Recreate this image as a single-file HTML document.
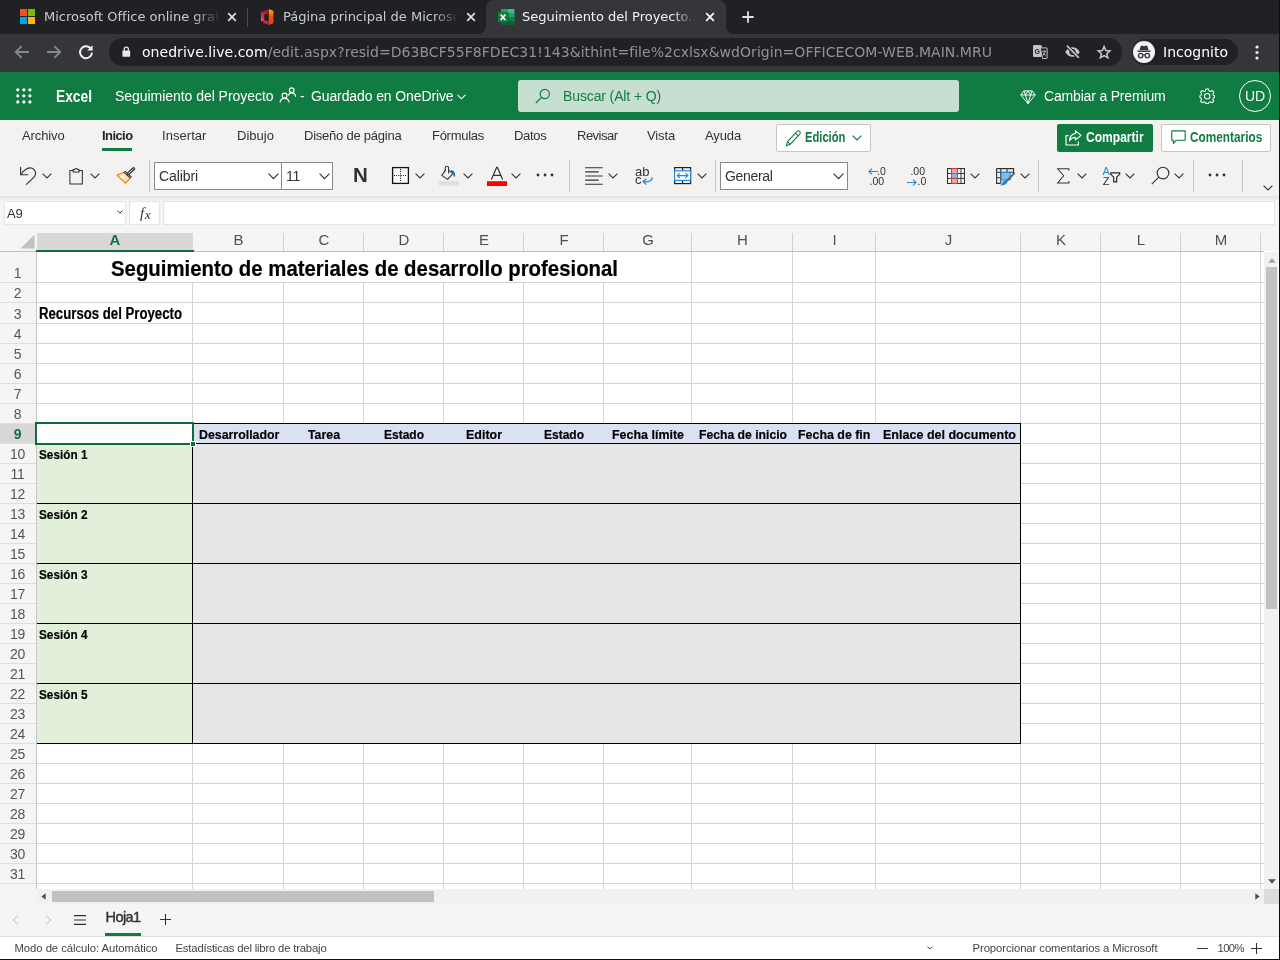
<!DOCTYPE html>
<html lang="es">
<head>
<meta charset="utf-8">
<title>Seguimiento del Proyecto.xlsx</title>
<style>
*{box-sizing:border-box;margin:0;padding:0}
html,body{width:1280px;height:960px;overflow:hidden;background:#f3f2f1}
body{position:relative;font-family:"Liberation Sans",sans-serif;color:#252423}
.a{position:absolute}
.t{position:absolute;white-space:nowrap;line-height:1}
.dj{font-family:"DejaVu Sans","Liberation Sans",sans-serif}
svg{position:absolute;overflow:visible}
/* chrome */
#tabstrip{left:0;top:0;width:1280px;height:34px;background:#202124}
#toolbar{left:0;top:34px;width:1280px;height:38px;background:#35363a}
#omni{left:109px;top:38px;width:1013px;height:28px;border-radius:14px;background:#202124}
#acttab{left:486px;top:0;width:240px;height:34px;background:#35363a;border-radius:8px 8px 0 0}
.tabt{font-size:13px;color:#c9ccd0}
/* excel header */
#xlhead{left:0;top:72px;width:1280px;height:48px;background:#107c41}
#search{left:518px;top:80px;width:441px;height:32px;border-radius:3px;background:#c7dfd1}
#ribbon{left:0;top:120px;width:1280px;height:76px;background:#f3f2f1}
.tab{font-size:13px;color:#323130}
.wbox{position:absolute;background:#fff;border:1px solid #8a8886}
.sep{position:absolute;width:1px;background:#c8c6c4}
/* grid */
.ch{position:absolute;top:232px;height:18px;font-size:15px;color:#505050;text-align:center;line-height:15px}
.rh{position:absolute;left:0;width:35px;height:20px;font-size:14px;color:#555;text-align:center;line-height:21px;letter-spacing:-0.3px}
.cell{font-weight:bold;color:#000;-webkit-text-stroke:0.2px #000}
.vl{position:absolute;width:1px;background:#d4d4d4}
.hl{position:absolute;height:1px;background:#d4d4d4}
.bl{position:absolute;background:#000}
</style>
</head>
<body>
<div id="root" style="position:absolute;left:0;top:0;width:1280px;height:960px;will-change:transform;transform:translateZ(0)">
<!-- ============ CHROME BROWSER ============ -->
<div class="a" id="tabstrip"></div>
<div class="a" id="acttab"></div>
<svg style="left:478px;top:26px" width="8" height="8" viewBox="0 0 8 8"><path d="M8 0V8H0A8 8 0 0 0 8 0Z" fill="#35363a"/></svg>
<svg style="left:726px;top:26px" width="8" height="8" viewBox="0 0 8 8"><path d="M0 0V8H8A8 8 0 0 1 0 0Z" fill="#35363a"/></svg>
<div class="a" id="toolbar"></div>
<div class="a" id="omni"></div>
<!-- tab 1 -->
<svg style="left:20px;top:9px" width="15" height="15" viewBox="0 0 15.6 15.6"><rect x="0" y="0" width="7.3" height="7.3" fill="#f25022"/><rect x="8.3" y="0" width="7.3" height="7.3" fill="#7fba00"/><rect x="0" y="8.3" width="7.3" height="7.3" fill="#00a4ef"/><rect x="8.3" y="8.3" width="7.3" height="7.3" fill="#ffb900"/></svg>
<div class="a dj tabt" style="left:44px;top:8px;width:176px;height:18px;overflow:hidden;line-height:18px;white-space:nowrap;-webkit-mask-image:linear-gradient(90deg,#000 150px,transparent 176px);mask-image:linear-gradient(90deg,#000 150px,transparent 176px)">Microsoft Office online gratis</div>
<svg style="left:227px;top:12px" width="10" height="10" viewBox="0 0 10 10"><path d="M1.2 1.2L8.8 8.8M8.8 1.2L1.2 8.8" stroke="#dfe1e5" stroke-width="1.7" fill="none"/></svg>
<div class="a" style="left:247px;top:8px;width:1px;height:19px;background:#4a4c50"></div>
<!-- tab 2 -->
<svg style="left:260.8px;top:8.9px" width="12.6" height="16.3" viewBox="0 0 12.6 16.3"><defs><linearGradient id="og1" x1="0" y1="0" x2="0" y2="1"><stop offset="0" stop-color="#ffb900"/><stop offset=".45" stop-color="#e8540b"/><stop offset="1" stop-color="#e8440a"/></linearGradient><linearGradient id="og2" x1="1" y1="0" x2="0" y2="1"><stop offset="0" stop-color="#a80f15"/><stop offset=".6" stop-color="#d4202c"/><stop offset="1" stop-color="#ec62c4"/></linearGradient><linearGradient id="og3" x1="0" y1="0" x2="1" y2="1"><stop offset="0" stop-color="#ff2a45"/><stop offset="1" stop-color="#b01020"/></linearGradient></defs><path d="M7.8 0.3L12.4 1.8V14.3L7.8 16.1Z" fill="url(#og1)"/><path d="M0 3.2L7.7 0.2V4.3L3.3 5.5V11.6L0 12.3Z" fill="url(#og2)"/><path d="M2.1 12.4L3.4 11.8H7.7V16.1L4.4 14.8L2.1 13.5Z" fill="url(#og3)"/></svg>
<div class="a dj tabt" style="left:283px;top:8px;width:176px;height:18px;overflow:hidden;line-height:18px;white-space:nowrap;-webkit-mask-image:linear-gradient(90deg,#000 150px,transparent 176px);mask-image:linear-gradient(90deg,#000 150px,transparent 176px)">Página principal de Microsoft Office</div>
<svg style="left:466px;top:12px" width="10" height="10" viewBox="0 0 10 10"><path d="M1.2 1.2L8.8 8.8M8.8 1.2L1.2 8.8" stroke="#dfe1e5" stroke-width="1.7" fill="none"/></svg>
<!-- tab 3 (active) -->
<svg style="left:498px;top:8.9px" width="16.3" height="16.1" viewBox="0 0 16.3 16.1"><rect x="3" y="0" width="13.3" height="16.1" rx=".6" fill="#21a366"/><rect x="9.7" y="0" width="6.6" height="4.1" fill="#33c481"/><rect x="9.7" y="4.1" width="6.6" height="4" fill="#21a366"/><rect x="3" y="8.1" width="13.3" height="4" fill="#107c41"/><rect x="3" y="12.1" width="13.3" height="4" fill="#185c37"/><rect x="3" y="3.6" width="7.8" height="10.4" fill="#0a4a2a" opacity=".55"/><rect x="0" y="3.1" width="10.1" height="10.2" rx=".6" fill="#107c41"/><path d="M2.7 5.5L7.4 11M7.4 5.5L2.7 11" stroke="#fff" stroke-width="1.7" fill="none"/></svg>
<div class="a dj tabt" style="left:522px;top:8px;width:174px;height:18px;overflow:hidden;line-height:18px;white-space:nowrap;color:#f1f3f4;-webkit-mask-image:linear-gradient(90deg,#000 150px,transparent 174px);mask-image:linear-gradient(90deg,#000 150px,transparent 174px)">Seguimiento del Proyecto.xlsx</div>
<svg style="left:705px;top:12px" width="10" height="10" viewBox="0 0 10 10"><path d="M1.2 1.2L8.8 8.8M8.8 1.2L1.2 8.8" stroke="#fff" stroke-width="1.7" fill="none"/></svg>
<!-- new tab -->
<svg style="left:742px;top:11px" width="12" height="12" viewBox="0 0 12 12"><path d="M6 0.3V11.7M0.3 6H11.7" stroke="#dee0e3" stroke-width="1.8" fill="none"/></svg>
<!-- nav buttons -->
<svg style="left:14px;top:45px" width="16" height="14" viewBox="0 0 16 14"><path d="M15 7H2.2M7.6 1.2L1.8 7L7.6 12.8" stroke="#85888c" stroke-width="1.9" fill="none"/></svg>
<svg style="left:46px;top:45px" width="16" height="14" viewBox="0 0 16 14"><path d="M1 7H13.8M8.4 1.2L14.2 7L8.4 12.8" stroke="#85888c" stroke-width="1.9" fill="none"/></svg>
<svg style="left:78px;top:44px" width="16" height="16" viewBox="0 0 16 16"><path d="M13.2 5.2A6 6 0 1 0 14 8.6" stroke="#f1f3f4" stroke-width="1.9" fill="none"/><path d="M14.6 1.2V6.6H9.2Z" fill="#f1f3f4"/></svg>
<!-- lock -->
<svg style="left:121.6px;top:46px" width="8.6" height="11.4" viewBox="0 0 10 13"><rect x="0.5" y="5" width="9" height="7.5" rx="1" fill="#e8eaed"/><path d="M2.6 5.5V3.6A2.4 2.4 0 0 1 7.4 3.6V5.5" stroke="#e8eaed" stroke-width="1.5" fill="none"/></svg>
<div class="t dj" style="left:142px;top:44px;font-size:14px;line-height:17px;color:#939393"><span style="letter-spacing:0.041px;display:inline-block"><span style="color:#fff">onedrive.live.com</span>/edit.aspx?resid=D63BCF55F8FDEC31!143&amp;ithint=file%2cxlsx&amp;wdOrigin=OFFICECOM-WEB.MAIN.MRU</span></div>
<!-- translate icon -->
<svg style="left:1032.8px;top:45px" width="14.6" height="14" viewBox="0 0 14.6 14"><rect x="0" y="0" width="8.7" height="12.1" rx="1" fill="#c2c4c6"/><path d="M7.2 2.9H13.6a.5.5 0 0 1 .5.5V13a.5.5 0 0 1-.5.5H9.6Z" fill="#202124" stroke="#c2c4c6" stroke-width="1"/><text x="1.6" y="8.6" font-size="7" font-weight="bold" fill="#202124" font-family="Liberation Sans,sans-serif">G</text><path d="M9.2 6.3H13M11.1 5.3V6.3M12.4 6.3C12 8.3 10.7 10 9.6 10.8M10.2 7.8C10.8 9.2 12 10.5 13 11" stroke="#c2c4c6" stroke-width="0.9" fill="none"/></svg>
<!-- eye off -->
<svg style="left:1064.5px;top:45px" width="15" height="13.6" viewBox="0 0 15 13.6"><path d="M0.3 7C1.8 3.9 4.4 2.2 7.5 2.2C10.6 2.2 13.2 3.9 14.7 7C13.2 10.1 10.6 11.8 7.5 11.8C4.4 11.8 1.8 10.1 0.3 7Z" fill="#c6c8ca"/><circle cx="7.5" cy="7" r="3.1" fill="#202124"/><circle cx="7.5" cy="7" r="1.7" fill="#c6c8ca"/><path d="M1.2 0.2L13.8 13" stroke="#202124" stroke-width="3.6"/><path d="M1.9 0.6L13.9 12.9" stroke="#c6c8ca" stroke-width="1.6"/></svg>
<!-- star -->
<svg style="left:1096.9px;top:45px" width="14.2" height="14" viewBox="0 0 14.2 14"><path d="M7.1 1.5L8.8 5.5L13 5.9L9.8 8.7L10.8 12.8L7.1 10.6L3.4 12.8L4.4 8.7L1.2 5.9L5.4 5.5Z" fill="none" stroke="#c6c8ca" stroke-width="1.5" stroke-linejoin="miter"/></svg>
<!-- incognito pill -->
<div class="a" style="left:1132px;top:39px;width:106px;height:26px;border-radius:13px;background:#202124"></div>
<svg style="left:1133px;top:41px" width="22" height="22" viewBox="0 0 22 22"><circle cx="11" cy="11" r="11" fill="#f1f3f4"/><path d="M7.6 5.2L8.6 4.6L11 5.2L13.4 4.6L14.4 5.2L15.6 9.2H6.4Z" fill="#35363a"/><rect x="4.4" y="9.6" width="13.2" height="1.3" fill="#35363a"/><circle cx="7.7" cy="14.5" r="2.2" fill="none" stroke="#35363a" stroke-width="1.3"/><circle cx="14.3" cy="14.5" r="2.2" fill="none" stroke="#35363a" stroke-width="1.3"/><path d="M9.7 14.1Q11 13.3 12.3 14.1" stroke="#35363a" stroke-width="1.1" fill="none"/></svg>
<div class="t dj" style="left:1163px;top:44px;font-size:14px;line-height:17px;color:#fff">Incognito</div>
<!-- kebab -->
<svg style="left:1255px;top:45px" width="4" height="15" viewBox="0 0 4 15"><circle cx="2" cy="2" r="1.6" fill="#f1f3f4"/><circle cx="2" cy="7.5" r="1.6" fill="#f1f3f4"/><circle cx="2" cy="13" r="1.6" fill="#f1f3f4"/></svg>
<!-- ============ EXCEL HEADER ============ -->
<div class="a" id="xlhead"></div>
<!-- waffle -->
<svg style="left:16px;top:87.9px" width="15.7" height="15.7" viewBox="-0.2 -0.2 15.8 15.8" fill="#fff"><circle cx="1.6" cy="1.6" r="1.6"/><circle cx="7.7" cy="1.6" r="1.6"/><circle cx="13.8" cy="1.6" r="1.6"/><circle cx="1.6" cy="7.7" r="1.6"/><circle cx="7.7" cy="7.7" r="1.6"/><circle cx="13.8" cy="7.7" r="1.6"/><circle cx="1.6" cy="13.8" r="1.6"/><circle cx="7.7" cy="13.8" r="1.6"/><circle cx="13.8" cy="13.8" r="1.6"/></svg>
<div class="t" style="left:56px;top:87px;font-size:16px;line-height:19px;font-weight:bold;color:#fff"><span style="transform:scaleX(0.8610);display:inline-block;transform-origin:0 50%">Excel</span></div>
<div class="t" style="left:115px;top:88px;font-size:14px;line-height:17px;color:#fff"><span style="letter-spacing:-0.044px;display:inline-block">Seguimiento del Proyecto</span></div>
<!-- people icon -->
<svg style="left:279px;top:86px" width="18" height="18" viewBox="0 0 18 18" fill="none" stroke="#fff" stroke-width="1.1"><circle cx="5.6" cy="9.6" r="2.5"/><path d="M1 16.6C1.3 13.6 3.2 12.4 5.6 12.4C8 12.4 9.9 13.6 10.2 16.6"/><circle cx="12.7" cy="4.2" r="2.3"/><path d="M9.4 9.6C10 7.7 11.3 6.9 12.7 6.9C14.7 6.9 16.3 8.2 16.6 10.8"/></svg>
<div class="t" style="left:300px;top:88px;font-size:14px;line-height:17px;color:#fff">-</div>
<div class="t" style="left:311px;top:88px;font-size:14px;line-height:17px;color:#fff"><span style="letter-spacing:-0.113px;display:inline-block">Guardado en OneDrive</span></div>
<svg style="left:457px;top:94px" width="9" height="6" viewBox="0 0 9 6"><path d="M0.6 0.8L4.5 4.8L8.4 0.8" stroke="#fff" stroke-width="1.1" fill="none"/></svg>
<!-- search -->
<div class="a" id="search"></div>
<svg style="left:535px;top:88px" width="16" height="16" viewBox="0 0 16 16" fill="none" stroke="#107c41" stroke-width="1.2"><circle cx="9.8" cy="6" r="4.6"/><path d="M6.5 9.3L0.8 15"/></svg>
<div class="t" style="left:563px;top:88px;font-size:14px;line-height:17px;color:#107c41"><span style="letter-spacing:-0.123px;display:inline-block">Buscar (Alt + Q)</span></div>
<!-- premium -->
<svg style="left:1020px;top:89.6px" width="16" height="14.4" viewBox="0 0 17 15.6" fill="none" stroke="#fff" stroke-width="1.05" stroke-linejoin="round"><path d="M4 1H13L16.3 5.4L8.5 14.8L0.7 5.4Z"/><path d="M0.7 5.4H16.3M4 1L5.7 5.4L8.5 14.8L11.3 5.4L13 1M5.7 5.4L8.5 1L11.3 5.4"/></svg>
<div class="t" style="left:1044px;top:88px;font-size:14px;line-height:17px;color:#fff"><span style="letter-spacing:-0.176px;display:inline-block">Cambiar a Premium</span></div>
<!-- gear -->
<svg style="left:1198.8px;top:87.8px" width="16.4" height="16.4" viewBox="0 0 18 18" fill="none" stroke="#fff" stroke-width="1.1" stroke-linejoin="round"><circle cx="9" cy="9" r="3"/><path d="M7.6 1H10.4L10.9 3.2L12.5 3.9L14.4 2.7L16.3 4.6L15.1 6.5L15.8 8.1L17 8.6V10.4L15.8 10.9L15.1 12.5L16.3 14.4L14.4 16.3L12.5 15.1L10.9 15.8L10.4 17H7.6L7.1 15.8L5.5 15.1L3.6 16.3L1.7 14.4L2.9 12.5L2.2 10.9L1 10.4V8.6L2.2 8.1L2.9 6.5L1.7 4.6L3.6 2.7L5.5 3.9L7.1 3.2Z"/></svg>
<!-- avatar -->
<div class="a" style="left:1239px;top:80px;width:32px;height:32px;border-radius:16px;border:1px solid #fff"></div>
<div class="t" style="left:1245px;top:88px;font-size:14px;line-height:17px;color:#fff"><span style="letter-spacing:-0.117px;display:inline-block">UD</span></div>
<!-- ============ RIBBON ============ -->
<div class="a" id="ribbon"></div>
<div class="a" style="left:0;top:196px;width:1280px;height:35px;background:#f5f5f5"></div>
<div class="a" style="left:0;top:196px;width:1280px;height:5px;background:linear-gradient(#e2e1e0,#f5f5f5)"></div>
<div class="t tab" style="left:22px;top:128px;line-height:16px"><span style="letter-spacing:-0.123px;display:inline-block">Archivo</span></div>
<div class="t tab" style="left:102px;top:128px;line-height:16px;font-weight:bold;color:#252423"><span style="letter-spacing:-0.576px;display:inline-block">Inicio</span></div>
<div class="a" style="left:102px;top:148px;width:30px;height:3px;background:#107c41"></div>
<div class="t tab" style="left:162px;top:128px;line-height:16px"><span style="letter-spacing:0.053px;display:inline-block">Insertar</span></div>
<div class="t tab" style="left:237px;top:128px;line-height:16px"><span style="letter-spacing:0.023px;display:inline-block">Dibujo</span></div>
<div class="t tab" style="left:304px;top:128px;line-height:16px"><span style="letter-spacing:-0.231px;display:inline-block">Diseño de página</span></div>
<div class="t tab" style="left:432px;top:128px;line-height:16px"><span style="letter-spacing:-0.273px;display:inline-block">Fórmulas</span></div>
<div class="t tab" style="left:514px;top:128px;line-height:16px"><span style="letter-spacing:-0.294px;display:inline-block">Datos</span></div>
<div class="t tab" style="left:577px;top:128px;line-height:16px"><span style="letter-spacing:-0.511px;display:inline-block">Revisar</span></div>
<div class="t tab" style="left:647px;top:128px;line-height:16px"><span style="letter-spacing:-0.134px;display:inline-block">Vista</span></div>
<div class="t tab" style="left:705px;top:128px;line-height:16px"><span style="letter-spacing:-0.128px;display:inline-block">Ayuda</span></div>
<!-- Edición button -->
<div class="a" style="left:776px;top:124px;width:95px;height:28px;background:#fff;border:1px solid #c8c6c4;border-radius:2px"></div>
<svg style="left:784.5px;top:130px" width="17" height="17" viewBox="0 0 18 18" fill="none" stroke="#107c41" stroke-width="1.15" stroke-linejoin="round"><path d="M12.6 1.6A1.9 1.9 0 0 1 15.6 4.4L5.6 15L1.4 16.6L2.6 12.2Z"/><path d="M11 3.4L14 6.2M2.6 12.2L5.6 15"/></svg>
<div class="t" style="left:805px;top:129.4px;font-size:14px;line-height:16px;font-weight:bold;color:#107c41"><span style="transform:scaleX(0.7990);display:inline-block;transform-origin:0 50%">Edición</span></div>
<svg style="left:852px;top:135px" width="10" height="6" viewBox="0 0 10 6"><path d="M0.6 0.6L5 5L9.4 0.6" stroke="#107c41" stroke-width="1.2" fill="none"/></svg>
<!-- Compartir -->
<div class="a" style="left:1057px;top:124px;width:96px;height:28px;background:#107c41;border-radius:2px"></div>
<svg style="left:1065px;top:130px" width="17" height="16" viewBox="0 0 17 16" fill="none" stroke="#fff" stroke-width="1.15" stroke-linejoin="round"><path d="M3.6 5.6H1V15H13.4V11.6"/><path d="M10.4 0.8L16 5.4L10.4 10V7.3C7.6 7.3 5.8 8.4 4.6 10.6C4.8 6.6 7 4 10.4 3.6Z"/></svg>
<div class="t" style="left:1086px;top:129.4px;font-size:14px;line-height:16px;font-weight:bold;color:#fff"><span style="transform:scaleX(0.8609);display:inline-block;transform-origin:0 50%">Compartir</span></div>
<!-- Comentarios -->
<div class="a" style="left:1161px;top:124px;width:110px;height:28px;background:#fff;border:1px solid #c8c6c4;border-radius:2px"></div>
<svg style="left:1171px;top:130px" width="15" height="15" viewBox="0 0 15 15" fill="none" stroke="#107c41" stroke-width="1.15" stroke-linejoin="round"><path d="M0.8 0.9H14.2V10.2H5.4L2.4 13.4V10.2H0.8Z"/></svg>
<div class="t" style="left:1190px;top:129.4px;font-size:14px;line-height:16px;font-weight:bold;color:#107c41"><span style="transform:scaleX(0.8437);display:inline-block;transform-origin:0 50%">Comentarios</span></div>

<!-- === toolbar row === -->
<!-- undo -->
<svg style="left:19px;top:166px" width="18" height="19" viewBox="0 0 18 19" fill="none" stroke="#323130" stroke-width="1.15"><path d="M1.6 0.9V8.75H9.1"/><path d="M2.2 8.2C5 3.5 9.5 0.8 13.2 2.2C17 3.8 17.6 8 15 11.2L7.2 18.6"/></svg>
<svg class="chv" style="left:42px;top:173px" width="10" height="6" viewBox="0 0 10 6"><path d="M0.6 0.6L5 5L9.4 0.6" stroke="#323130" stroke-width="1.1" fill="none"/></svg>
<!-- paste -->
<svg style="left:68.8px;top:166.6px" width="14.6" height="18.4" viewBox="0 0 16 19" fill="none" stroke="#323130" stroke-width="1.15"><path d="M4.6 3.2H1V18H14.6V3.2H11"/><path d="M4.6 4.8V2.2H6.2A1.7 1.7 0 0 1 9.4 2.2H11V4.8Z"/></svg>
<svg style="left:90px;top:173px" width="10" height="6" viewBox="0 0 10 6"><path d="M0.6 0.6L5 5L9.4 0.6" stroke="#323130" stroke-width="1.1" fill="none"/></svg>
<!-- format painter -->
<svg style="left:116px;top:167px" width="19" height="17" viewBox="0 0 19 17" fill="none"><path d="M0.9 8.2L8 5.2L14.4 11L9.4 16.2Z" fill="#fbdcb4" stroke="#e8810c" stroke-width="1.1" stroke-linejoin="round"/><path d="M3.4 9L7.6 12.6L8.4 8.4Z" fill="#fff4e4"/><path d="M8.4 4.6L15 10.6" stroke="#323130" stroke-width="2.6"/><path d="M8.8 5L14.6 10.2" stroke="#f3f2f1" stroke-width=".7"/><path d="M12.4 6.6L17.6 1.8" stroke="#323130" stroke-width="3.2" stroke-linecap="round"/><path d="M12.6 6.4L17.5 1.9" stroke="#f3f2f1" stroke-width="1" stroke-linecap="round"/></svg>
<div class="sep" style="left:149px;top:160px;height:32px"></div>
<!-- font box -->
<div class="wbox" style="left:154px;top:162px;width:128px;height:28px"></div>
<div class="wbox" style="left:281px;top:162px;width:52px;height:28px"></div>
<div class="t" style="left:159px;top:168px;font-size:14px;line-height:17px;color:#323130"><span style="letter-spacing:-0.098px;display:inline-block">Calibri</span></div>
<svg style="left:268px;top:173px" width="11" height="7" viewBox="0 0 11 7"><path d="M0.6 0.6L5.5 5.6L10.4 0.6" stroke="#323130" stroke-width="1.1" fill="none"/></svg>
<div class="t" style="left:286px;top:168px;font-size:14px;line-height:17px;color:#323130"><span style="letter-spacing:-0.273px;display:inline-block">11</span></div>
<svg style="left:319px;top:173px" width="11" height="7" viewBox="0 0 11 7"><path d="M0.6 0.6L5.5 5.6L10.4 0.6" stroke="#323130" stroke-width="1.1" fill="none"/></svg>
<!-- bold N -->
<div class="t" style="left:353px;top:164px;font-size:20.5px;line-height:22px;font-weight:bold;color:#323130"><span style="letter-spacing:-0.213px;display:inline-block">N</span></div>
<!-- borders -->
<svg style="left:392px;top:167px" width="17" height="17" viewBox="0 0 17 17" fill="none" stroke="#323130"><rect x="0.6" y="0.6" width="15.8" height="15.8" stroke-width="1.3" stroke="#111" fill="#fafafa"/><path d="M8.5 2V15M2 8.5H15" stroke-width="1" stroke-dasharray="1 1.2" stroke="#111"/></svg>
<svg style="left:415px;top:173px" width="10" height="6" viewBox="0 0 10 6"><path d="M0.6 0.6L5 5L9.4 0.6" stroke="#323130" stroke-width="1.1" fill="none"/></svg>
<!-- fill bucket -->
<svg style="left:439px;top:165px" width="20" height="22" viewBox="0 0 20 22" fill="none"><path d="M6.2 6.2V3A1.7 1.7 0 0 1 9.6 3V8.4" stroke="#323130" stroke-width="1.1"/><path d="M6.4 5.4L2.8 10.4L8.6 14.4L14 8.4L9.8 5.6" stroke="#323130" stroke-width="1.1" stroke-linejoin="round"/><path d="M11.4 5.2C14.8 4.8 16.6 7.4 16.1 11.6H14.5C14.7 9.2 13.9 7.6 11.8 7Z" fill="#1f6fc2"/><rect x="0" y="16.2" width="20" height="4.6" fill="#e1dfdd"/></svg>
<svg style="left:463px;top:173px" width="10" height="6" viewBox="0 0 10 6"><path d="M0.6 0.6L5 5L9.4 0.6" stroke="#323130" stroke-width="1.1" fill="none"/></svg>
<!-- font colour -->
<svg style="left:487px;top:166px" width="20" height="21" viewBox="0 0 20 21" fill="none"><path d="M4.4 13.4L9.6 1.4H10.4L15.6 13.4M6.2 9.4H13.8" stroke="#323130" stroke-width="1.15"/><rect x="0" y="15.2" width="20" height="4.8" fill="#fb0007"/></svg>
<svg style="left:511px;top:173px" width="10" height="6" viewBox="0 0 10 6"><path d="M0.6 0.6L5 5L9.4 0.6" stroke="#323130" stroke-width="1.1" fill="none"/></svg>
<!-- more -->
<svg style="left:536px;top:173px" width="18" height="4" viewBox="0 0 18 4" fill="#323130"><circle cx="2" cy="2" r="1.4"/><circle cx="9" cy="2" r="1.4"/><circle cx="16" cy="2" r="1.4"/></svg>
<div class="sep" style="left:569px;top:160px;height:32px"></div>
<!-- align -->
<svg style="left:585px;top:166.9px" width="18" height="18" viewBox="0 0 18 18" stroke="#323130" stroke-width="1.1"><path d="M0.2 0.7H17.8M0.2 4.85H13.6M0.2 9H17.8M0.2 13.15H13.6M0.2 17.3H17.8"/></svg>
<svg style="left:608px;top:173px" width="10" height="6" viewBox="0 0 10 6"><path d="M0.6 0.6L5 5L9.4 0.6" stroke="#323130" stroke-width="1.1" fill="none"/></svg>
<!-- wrap text -->
<div class="t" style="left:635px;top:164px;font-size:13px;line-height:15px;color:#323130"><span style="letter-spacing:-0.034px;display:inline-block">ab</span></div>
<div class="t" style="left:635px;top:172.4px;font-size:13px;line-height:15px;color:#323130">c</div>
<svg style="left:634px;top:176px" width="19" height="10" viewBox="0 0 19 10" fill="none"><path d="M18 1.2C18.4 4.8 15 6.2 9.4 5.7" stroke="#2488d8" stroke-width="1.2"/><path d="M12.4 2.8L9 5.7L12.4 8.6" stroke="#2488d8" stroke-width="1.2"/></svg>
<!-- merge -->
<svg style="left:674px;top:166.6px" width="17.2" height="17.2" viewBox="0 0 17.2 17.2" fill="none"><rect x="0.6" y="0.6" width="16" height="16" stroke="#222" stroke-width="1.2"/><path d="M8.6 0.6V3.8M8.6 13.4V16.6" stroke="#222" stroke-width="1.2"/><rect x="0.6" y="3.8" width="16" height="9.6" fill="#fff" stroke="#2488d8" stroke-width="1.2"/><path d="M3.4 8.6H13.8M5.8 6.2L3.2 8.6L5.8 11M11.4 6.2L14 8.6L11.4 11" stroke="#2488d8" stroke-width="1.1"/></svg>
<svg style="left:697px;top:173px" width="10" height="6" viewBox="0 0 10 6"><path d="M0.6 0.6L5 5L9.4 0.6" stroke="#323130" stroke-width="1.1" fill="none"/></svg>
<div class="sep" style="left:715px;top:160px;height:32px"></div>
<!-- number format -->
<div class="wbox" style="left:720px;top:162px;width:128px;height:28px"></div>
<div class="t" style="left:725px;top:168px;font-size:14px;line-height:17px;color:#323130"><span style="letter-spacing:-0.330px;display:inline-block">General</span></div>
<svg style="left:833px;top:173px" width="11" height="7" viewBox="0 0 11 7"><path d="M0.6 0.6L5.5 5.6L10.4 0.6" stroke="#323130" stroke-width="1.1" fill="none"/></svg>
<!-- decimals -->
<div class="t" style="left:877px;top:165.8px;font-size:10.5px;line-height:11px;color:#323130">.0</div>
<div class="t" style="left:869.6px;top:176px;font-size:10.5px;line-height:11px;color:#323130">.00</div>
<svg style="left:868px;top:168.2px" width="10" height="7" viewBox="0 0 10 7" fill="none" stroke="#2488d8" stroke-width="1.1"><path d="M10 3.5H1M4 0.6L1 3.5L4 6.4"/></svg>
<div class="t" style="left:910.4px;top:165.8px;font-size:10.5px;line-height:11px;color:#323130">.00</div>
<div class="t" style="left:917.6px;top:176px;font-size:10.5px;line-height:11px;color:#323130">.0</div>
<svg style="left:907px;top:178.6px" width="10" height="7" viewBox="0 0 10 7" fill="none" stroke="#2488d8" stroke-width="1.1"><path d="M0 3.5H9M6 0.6L9 3.5L6 6.4"/></svg>
<!-- conditional formatting -->
<svg style="left:947px;top:168px" width="18" height="16" viewBox="0 0 18 16" fill="none"><rect x="0.55" y="0.55" width="16.9" height="14.9" fill="#fff" stroke="#323130" stroke-width="1.1"/><path d="M4.6 0.6V15.4M10.4 0.6V15.4M14 0.6V15.4M0.6 5.5H17.4M0.6 10.4H17.4" stroke="#323130" stroke-width="1"/><rect x="4.6" y="0.6" width="5.8" height="4.9" fill="#f7a6ab" stroke="#e8303a" stroke-width="1"/><rect x="4.6" y="5.5" width="5.8" height="4.9" fill="#7fbdf0" stroke="#2488d8" stroke-width="1"/><rect x="4.6" y="10.4" width="5.8" height="5" fill="#f7a6ab" stroke="#e8303a" stroke-width="1"/></svg>
<svg style="left:970px;top:173px" width="10" height="6" viewBox="0 0 10 6"><path d="M0.6 0.6L5 5L9.4 0.6" stroke="#323130" stroke-width="1.1" fill="none"/></svg>
<!-- format as table -->
<svg style="left:996px;top:168px" width="19" height="18" viewBox="0 0 19 18" fill="none"><path d="M0.6 0.6H17.6V5.4M0.6 0.6V15.4H4.4M0.6 4.2H17.6M4.8 0.6V15.4M0.6 9.8H4.8M11 0.6V4.2M0.6 15.4H4.4" stroke="#323130" stroke-width="1.1"/><rect x="5.2" y="4.4" width="9" height="7.4" fill="#7fbdf0" stroke="#2488d8" stroke-width="1"/><path d="M18.6 4.8L10.4 13.4" stroke="#323130" stroke-width="1.7"/><path d="M18.6 4.8L10.4 13.4" stroke="#f3f2f1" stroke-width=".5"/><path d="M9.4 12C12.6 12.6 12.4 17.4 4 17.4C6.6 16.2 6.4 12.4 9.4 12Z" fill="#2488d8"/></svg>
<svg style="left:1020px;top:173px" width="10" height="6" viewBox="0 0 10 6"><path d="M0.6 0.6L5 5L9.4 0.6" stroke="#323130" stroke-width="1.1" fill="none"/></svg>
<div class="sep" style="left:1038px;top:160px;height:32px"></div>
<!-- sigma -->
<svg style="left:1056px;top:168px" width="14.4" height="15.8" viewBox="0 0 15 18" fill="none" stroke="#323130" stroke-width="1.15"><path d="M14 3V0.8H1.2L8 8.8L1.2 17H14V14.8"/></svg>
<svg style="left:1077px;top:173px" width="10" height="6" viewBox="0 0 10 6"><path d="M0.6 0.6L5 5L9.4 0.6" stroke="#323130" stroke-width="1.1" fill="none"/></svg>
<!-- sort & filter -->
<div class="t" style="left:1102.6px;top:166.4px;font-size:11px;line-height:11px;color:#2488d8">A</div>
<div class="t" style="left:1102.8px;top:176.4px;font-size:11px;line-height:11px;color:#323130">Z</div>
<svg style="left:1110px;top:171.6px" width="10.4" height="10.6" viewBox="0 0 10.4 10.6" fill="#fff" stroke="#222" stroke-width="1.2" stroke-linejoin="round"><path d="M0.7 0.8H9.7V2.2L6.7 5.2V9.8H3.7V5.2L0.7 2.2Z"/></svg>
<svg style="left:1125px;top:173px" width="10" height="6" viewBox="0 0 10 6"><path d="M0.6 0.6L5 5L9.4 0.6" stroke="#323130" stroke-width="1.1" fill="none"/></svg>
<!-- find -->
<svg style="left:1151px;top:166px" width="19" height="19" viewBox="0 0 19 19" fill="none" stroke="#323130" stroke-width="1.15"><circle cx="12" cy="7" r="5.8"/><path d="M7.8 11.2L0.8 18.2"/></svg>
<svg style="left:1174px;top:173px" width="10" height="6" viewBox="0 0 10 6"><path d="M0.6 0.6L5 5L9.4 0.6" stroke="#323130" stroke-width="1.1" fill="none"/></svg>
<div class="sep" style="left:1193px;top:160px;height:32px"></div>
<svg style="left:1208px;top:173px" width="18" height="4" viewBox="0 0 18 4" fill="#323130"><circle cx="2" cy="2" r="1.4"/><circle cx="9" cy="2" r="1.4"/><circle cx="16" cy="2" r="1.4"/></svg>
<div class="sep" style="left:1242px;top:160px;height:32px"></div>
<svg style="left:1263px;top:185px" width="10" height="6" viewBox="0 0 10 6"><path d="M0.6 0.6L5 5L9.4 0.6" stroke="#323130" stroke-width="1.1" fill="none"/></svg>

<!-- === formula bar === -->
<div class="a" style="left:4px;top:201px;width:122px;height:24px;background:#fff;border:1px solid #e5e5e5"></div>
<div class="t" style="left:7px;top:206px;font-size:13px;line-height:15px;color:#323130"><span style="letter-spacing:-0.203px;display:inline-block">A9</span></div>
<svg style="left:116.6px;top:209.6px" width="5.8" height="4.2" viewBox="0 0 7 5"><path d="M0.6 0.8L3.5 3.8L6.4 0.8" stroke="#323130" stroke-width="1.2" fill="none"/></svg>
<div class="a" style="left:129px;top:201px;width:31px;height:24px;background:#fff;border:1px solid #e5e5e5"></div>
<div class="t" style="left:140px;top:205px;font-family:'Liberation Serif',serif;font-style:italic;font-size:15px;line-height:17px;color:#323130">f<span style="font-size:13.5px;margin-left:0.5px;position:relative;top:0.5px">x</span></div>
<div class="a" style="left:163px;top:201px;width:1112px;height:24px;background:#fff;border:1px solid #e5e5e5"></div>
<!-- ============ GRID ============ -->
<div class="a" style="left:0;top:231px;width:1280px;height:658px;background:#fff"></div>
<div class="a" style="left:0;top:231px;width:1280px;height:20px;background:#f5f5f5"></div>
<div class="a" style="left:0;top:252px;width:36px;height:637px;background:#f5f5f5"></div>
<div class="a" style="left:37px;top:233px;width:156px;height:17px;background:#dad8d6"></div>
<div class="a" style="left:0;top:424px;width:35px;height:19px;background:#dad8d6"></div>
<svg style="left:20px;top:234px" width="15" height="15" viewBox="0 0 15 15"><path d="M14.5 0.5V14.5H0.5Z" fill="#c2c2c2"/></svg>
<div class="hl" style="left:0;top:251px;width:1264px;background:#bfbfbf"></div>
<div class="vl" style="left:36px;top:252px;height:637px;background:#c6c6c6"></div>
<div class="a" style="left:36px;top:250px;width:158px;height:2px;background:#106b3b"></div>
<div class="ch" style="left:37px;width:156px;font-weight:bold;color:#137040;">A</div>
<div class="ch" style="left:193px;width:91px;">B</div>
<div class="vl" style="left:283px;top:233px;height:18px;background:#d0d0d0"></div>
<div class="ch" style="left:284px;width:80px;">C</div>
<div class="vl" style="left:363px;top:233px;height:18px;background:#d0d0d0"></div>
<div class="ch" style="left:364px;width:80px;">D</div>
<div class="vl" style="left:443px;top:233px;height:18px;background:#d0d0d0"></div>
<div class="ch" style="left:444px;width:80px;">E</div>
<div class="vl" style="left:523px;top:233px;height:18px;background:#d0d0d0"></div>
<div class="ch" style="left:524px;width:80px;">F</div>
<div class="vl" style="left:603px;top:233px;height:18px;background:#d0d0d0"></div>
<div class="ch" style="left:604px;width:88px;">G</div>
<div class="vl" style="left:691px;top:233px;height:18px;background:#d0d0d0"></div>
<div class="ch" style="left:692px;width:101px;">H</div>
<div class="vl" style="left:792px;top:233px;height:18px;background:#d0d0d0"></div>
<div class="ch" style="left:793px;width:83px;">I</div>
<div class="vl" style="left:875px;top:233px;height:18px;background:#d0d0d0"></div>
<div class="ch" style="left:876px;width:145px;">J</div>
<div class="vl" style="left:1020px;top:233px;height:18px;background:#d0d0d0"></div>
<div class="ch" style="left:1021px;width:80px;">K</div>
<div class="vl" style="left:1100px;top:233px;height:18px;background:#d0d0d0"></div>
<div class="ch" style="left:1101px;width:80px;">L</div>
<div class="vl" style="left:1180px;top:233px;height:18px;background:#d0d0d0"></div>
<div class="ch" style="left:1181px;width:80px;">M</div>
<div class="vl" style="left:1260px;top:233px;height:18px;background:#d0d0d0"></div>
<div class="a" style="left:193px;top:424px;width:827px;height:19px;background:#d9e1f2"></div>
<div class="a" style="left:37px;top:444px;width:155px;height:299px;background:#e2efda"></div>
<div class="a" style="left:193px;top:444px;width:827px;height:299px;background:#e6e6e6"></div>
<div class="vl" style="left:192px;top:252px;height:171px"></div>
<div class="vl" style="left:192px;top:744px;height:145px"></div>
<div class="vl" style="left:283px;top:252px;height:171px"></div>
<div class="vl" style="left:283px;top:744px;height:145px"></div>
<div class="vl" style="left:363px;top:252px;height:171px"></div>
<div class="vl" style="left:363px;top:744px;height:145px"></div>
<div class="vl" style="left:443px;top:252px;height:171px"></div>
<div class="vl" style="left:443px;top:744px;height:145px"></div>
<div class="vl" style="left:523px;top:252px;height:171px"></div>
<div class="vl" style="left:523px;top:744px;height:145px"></div>
<div class="vl" style="left:603px;top:252px;height:171px"></div>
<div class="vl" style="left:603px;top:744px;height:145px"></div>
<div class="vl" style="left:691px;top:252px;height:171px"></div>
<div class="vl" style="left:691px;top:744px;height:145px"></div>
<div class="vl" style="left:792px;top:252px;height:171px"></div>
<div class="vl" style="left:792px;top:744px;height:145px"></div>
<div class="vl" style="left:875px;top:252px;height:171px"></div>
<div class="vl" style="left:875px;top:744px;height:145px"></div>
<div class="vl" style="left:1020px;top:252px;height:171px"></div>
<div class="vl" style="left:1020px;top:744px;height:145px"></div>
<div class="vl" style="left:1100px;top:252px;height:637px"></div>
<div class="vl" style="left:1180px;top:252px;height:637px"></div>
<div class="vl" style="left:1260px;top:252px;height:637px"></div>
<div class="hl" style="left:37px;top:282px;width:1227px"></div>
<div class="hl" style="left:0;top:282px;width:36px;background:#dedede"></div>
<div class="hl" style="left:37px;top:302px;width:1227px"></div>
<div class="hl" style="left:0;top:302px;width:36px;background:#dedede"></div>
<div class="hl" style="left:37px;top:323px;width:1227px"></div>
<div class="hl" style="left:0;top:323px;width:36px;background:#dedede"></div>
<div class="hl" style="left:37px;top:343px;width:1227px"></div>
<div class="hl" style="left:0;top:343px;width:36px;background:#dedede"></div>
<div class="hl" style="left:37px;top:363px;width:1227px"></div>
<div class="hl" style="left:0;top:363px;width:36px;background:#dedede"></div>
<div class="hl" style="left:37px;top:383px;width:1227px"></div>
<div class="hl" style="left:0;top:383px;width:36px;background:#dedede"></div>
<div class="hl" style="left:37px;top:403px;width:1227px"></div>
<div class="hl" style="left:0;top:403px;width:36px;background:#dedede"></div>
<div class="hl" style="left:1021px;top:423px;width:243px"></div>
<div class="hl" style="left:37px;top:423px;width:157px"></div>
<div class="hl" style="left:0;top:423px;width:36px;background:#dedede"></div>
<div class="hl" style="left:1021px;top:443px;width:243px"></div>
<div class="hl" style="left:0;top:443px;width:36px;background:#dedede"></div>
<div class="hl" style="left:1021px;top:463px;width:243px"></div>
<div class="hl" style="left:0;top:463px;width:36px;background:#dedede"></div>
<div class="hl" style="left:1021px;top:483px;width:243px"></div>
<div class="hl" style="left:0;top:483px;width:36px;background:#dedede"></div>
<div class="hl" style="left:1021px;top:503px;width:243px"></div>
<div class="hl" style="left:0;top:503px;width:36px;background:#dedede"></div>
<div class="hl" style="left:1021px;top:523px;width:243px"></div>
<div class="hl" style="left:0;top:523px;width:36px;background:#dedede"></div>
<div class="hl" style="left:1021px;top:543px;width:243px"></div>
<div class="hl" style="left:0;top:543px;width:36px;background:#dedede"></div>
<div class="hl" style="left:1021px;top:563px;width:243px"></div>
<div class="hl" style="left:0;top:563px;width:36px;background:#dedede"></div>
<div class="hl" style="left:1021px;top:583px;width:243px"></div>
<div class="hl" style="left:0;top:583px;width:36px;background:#dedede"></div>
<div class="hl" style="left:1021px;top:603px;width:243px"></div>
<div class="hl" style="left:0;top:603px;width:36px;background:#dedede"></div>
<div class="hl" style="left:1021px;top:623px;width:243px"></div>
<div class="hl" style="left:0;top:623px;width:36px;background:#dedede"></div>
<div class="hl" style="left:1021px;top:643px;width:243px"></div>
<div class="hl" style="left:0;top:643px;width:36px;background:#dedede"></div>
<div class="hl" style="left:1021px;top:663px;width:243px"></div>
<div class="hl" style="left:0;top:663px;width:36px;background:#dedede"></div>
<div class="hl" style="left:1021px;top:683px;width:243px"></div>
<div class="hl" style="left:0;top:683px;width:36px;background:#dedede"></div>
<div class="hl" style="left:1021px;top:703px;width:243px"></div>
<div class="hl" style="left:0;top:703px;width:36px;background:#dedede"></div>
<div class="hl" style="left:1021px;top:723px;width:243px"></div>
<div class="hl" style="left:0;top:723px;width:36px;background:#dedede"></div>
<div class="hl" style="left:1021px;top:743px;width:243px"></div>
<div class="hl" style="left:0;top:743px;width:36px;background:#dedede"></div>
<div class="hl" style="left:37px;top:763px;width:1227px"></div>
<div class="hl" style="left:0;top:763px;width:36px;background:#dedede"></div>
<div class="hl" style="left:37px;top:783px;width:1227px"></div>
<div class="hl" style="left:0;top:783px;width:36px;background:#dedede"></div>
<div class="hl" style="left:37px;top:803px;width:1227px"></div>
<div class="hl" style="left:0;top:803px;width:36px;background:#dedede"></div>
<div class="hl" style="left:37px;top:823px;width:1227px"></div>
<div class="hl" style="left:0;top:823px;width:36px;background:#dedede"></div>
<div class="hl" style="left:37px;top:843px;width:1227px"></div>
<div class="hl" style="left:0;top:843px;width:36px;background:#dedede"></div>
<div class="hl" style="left:37px;top:863px;width:1227px"></div>
<div class="hl" style="left:0;top:863px;width:36px;background:#dedede"></div>
<div class="hl" style="left:37px;top:883px;width:1227px"></div>
<div class="hl" style="left:0;top:883px;width:36px;background:#dedede"></div>
<div class="a" style="left:37px;top:252px;width:654px;height:30px;background:#fff"></div>
<div class="rh" style="top:263px;">1</div>
<div class="rh" style="top:283px;">2</div>
<div class="rh" style="top:304px;">3</div>
<div class="rh" style="top:324px;">4</div>
<div class="rh" style="top:344px;">5</div>
<div class="rh" style="top:364px;">6</div>
<div class="rh" style="top:384px;">7</div>
<div class="rh" style="top:404px;">8</div>
<div class="rh" style="top:424px;font-weight:bold;color:#137040;">9</div>
<div class="rh" style="top:444px;">10</div>
<div class="rh" style="top:464px;">11</div>
<div class="rh" style="top:484px;">12</div>
<div class="rh" style="top:504px;">13</div>
<div class="rh" style="top:524px;">14</div>
<div class="rh" style="top:544px;">15</div>
<div class="rh" style="top:564px;">16</div>
<div class="rh" style="top:584px;">17</div>
<div class="rh" style="top:604px;">18</div>
<div class="rh" style="top:624px;">19</div>
<div class="rh" style="top:644px;">20</div>
<div class="rh" style="top:664px;">21</div>
<div class="rh" style="top:684px;">22</div>
<div class="rh" style="top:704px;">23</div>
<div class="rh" style="top:724px;">24</div>
<div class="rh" style="top:744px;">25</div>
<div class="rh" style="top:764px;">26</div>
<div class="rh" style="top:784px;">27</div>
<div class="rh" style="top:804px;">28</div>
<div class="rh" style="top:824px;">29</div>
<div class="rh" style="top:844px;">30</div>
<div class="rh" style="top:864px;">31</div>
<div class="bl" style="left:194px;top:423px;width:827px;height:1px"></div>
<div class="bl" style="left:193px;top:443px;width:828px;height:1px"></div>
<div class="bl" style="left:1020px;top:423px;width:1px;height:321px"></div>
<div class="bl" style="left:192px;top:444px;width:1px;height:300px"></div>
<div class="bl" style="left:37px;top:503px;width:984px;height:1px"></div>
<div class="bl" style="left:37px;top:563px;width:984px;height:1px"></div>
<div class="bl" style="left:37px;top:623px;width:984px;height:1px"></div>
<div class="bl" style="left:37px;top:683px;width:984px;height:1px"></div>
<div class="bl" style="left:37px;top:743px;width:984px;height:1px"></div>
<div class="a" style="left:35px;top:422px;width:159px;height:23px;border:2px solid #106b3b;background:#fff"></div>
<div class="a" style="left:190px;top:441px;width:6px;height:6px;background:#106b3b;border-left:1px solid #fff;border-top:1px solid #fff"></div>
<div class="a" style="left:195px;top:441px;width:1px;height:6px;background:#fff"></div>
<div class="a" style="left:190px;top:446px;width:6px;height:1px;background:#fff"></div>
<div class="t cell" style="left:111px;top:257px;font-size:21.5px;line-height:25px"><span style="transform:scaleX(0.9472);display:inline-block;transform-origin:0 50%">Seguimiento de materiales de desarrollo profesional</span></div>
<div class="t cell" style="left:39px;top:305px;font-size:15.6px;line-height:17px"><span style="transform:scaleX(0.8462);display:inline-block;transform-origin:0 50%">Recursos del Proyecto</span></div>
<div class="t cell" style="left:198.9px;top:427px;font-size:13.6px;line-height:16px"><span style="transform:scaleX(0.9094);display:inline-block;transform-origin:0 50%">Desarrollador</span></div>
<div class="t cell" style="left:308.4px;top:427px;font-size:13.6px;line-height:16px"><span style="transform:scaleX(0.9074);display:inline-block;transform-origin:0 50%">Tarea</span></div>
<div class="t cell" style="left:384px;top:427px;font-size:13.6px;line-height:16px"><span style="transform:scaleX(0.8825);display:inline-block;transform-origin:0 50%">Estado</span></div>
<div class="t cell" style="left:466px;top:427px;font-size:13.6px;line-height:16px"><span style="transform:scaleX(0.9165);display:inline-block;transform-origin:0 50%">Editor</span></div>
<div class="t cell" style="left:544px;top:427px;font-size:13.6px;line-height:16px"><span style="transform:scaleX(0.8825);display:inline-block;transform-origin:0 50%">Estado</span></div>
<div class="t cell" style="left:612px;top:427px;font-size:13.6px;line-height:16px"><span style="transform:scaleX(0.9163);display:inline-block;transform-origin:0 50%">Fecha límite</span></div>
<div class="t cell" style="left:698.6px;top:427px;font-size:13.6px;line-height:16px"><span style="transform:scaleX(0.8961);display:inline-block;transform-origin:0 50%">Fecha de inicio</span></div>
<div class="t cell" style="left:798.4px;top:427px;font-size:13.6px;line-height:16px"><span style="transform:scaleX(0.9128);display:inline-block;transform-origin:0 50%">Fecha de fin</span></div>
<div class="t cell" style="left:882.5px;top:427px;font-size:13.6px;line-height:16px"><span style="transform:scaleX(0.9218);display:inline-block;transform-origin:0 50%">Enlace del documento</span></div>
<div class="t cell" style="left:39.4px;top:447.3px;font-size:13.6px;line-height:16px"><span style="transform:scaleX(0.8673);display:inline-block;transform-origin:0 50%">Sesión 1</span></div>
<div class="t cell" style="left:39.4px;top:507.3px;font-size:13.6px;line-height:16px"><span style="transform:scaleX(0.8673);display:inline-block;transform-origin:0 50%">Sesión 2</span></div>
<div class="t cell" style="left:39.4px;top:567.3px;font-size:13.6px;line-height:16px"><span style="transform:scaleX(0.8673);display:inline-block;transform-origin:0 50%">Sesión 3</span></div>
<div class="t cell" style="left:39.4px;top:627.3px;font-size:13.6px;line-height:16px"><span style="transform:scaleX(0.8673);display:inline-block;transform-origin:0 50%">Sesión 4</span></div>
<div class="t cell" style="left:39.4px;top:687.3px;font-size:13.6px;line-height:16px"><span style="transform:scaleX(0.8673);display:inline-block;transform-origin:0 50%">Sesión 5</span></div>
<div class="a" style="left:1264px;top:252px;width:14px;height:637px;background:#f1f1f1"></div>
<div class="a" style="left:1266px;top:267px;width:11px;height:342px;background:#c1c1c1"></div>
<svg style="left:1268px;top:258px" width="8" height="5" viewBox="0 0 8 5"><path d="M4 0.3L7.8 4.7H0.2Z" fill="#a3a3a3"/></svg>
<svg style="left:1268px;top:879px" width="8" height="5" viewBox="0 0 8 5"><path d="M4 4.7L7.8 0.3H0.2Z" fill="#505050"/></svg>
<!-- ============ BOTTOM ============ -->
<div class="a" style="left:0;top:889px;width:1280px;height:15px;background:#f1f1f1"></div>
<div class="a" style="left:0;top:889px;width:37px;height:15px;background:#f5f5f5"></div>
<div class="a" style="left:1264px;top:889px;width:16px;height:15px;background:#dcdcdc"></div>
<svg style="left:41px;top:893px" width="5" height="7" viewBox="0 0 5 7"><path d="M0.3 3.5L4.7 0.2V6.8Z" fill="#505050"/></svg>
<svg style="left:1255px;top:893px" width="5" height="7" viewBox="0 0 5 7"><path d="M4.7 3.5L0.3 0.2V6.8Z" fill="#505050"/></svg>
<div class="a" style="left:52px;top:891px;width:382px;height:11px;background:#c1c1c1"></div>
<!-- sheet tabs -->
<div class="a" style="left:0;top:904px;width:1280px;height:32px;background:#f5f5f5"></div>
<svg style="left:12px;top:915px" width="7" height="10" viewBox="0 0 7 10"><path d="M6 0.6L1 5L6 9.4" stroke="#bdbdbd" stroke-width="1" fill="none"/></svg>
<svg style="left:45px;top:915px" width="7" height="10" viewBox="0 0 7 10"><path d="M1 0.6L6 5L1 9.4" stroke="#bdbdbd" stroke-width="1" fill="none"/></svg>
<svg style="left:74px;top:915px" width="12" height="10" viewBox="0 0 12 10" stroke="#323130" stroke-width="1.1"><path d="M0 0.6H12M0 5H12M0 9.4H12"/></svg>
<div class="t" style="left:105.5px;top:909px;font-size:14.5px;line-height:17px;color:#323130;-webkit-text-stroke:0.4px #323130"><span style="letter-spacing:-0.578px;display:inline-block">Hoja1</span></div>
<div class="a" style="left:105px;top:933px;width:36px;height:3px;background:#107c41"></div>
<svg style="left:160px;top:914px" width="11" height="11" viewBox="0 0 11 11" stroke="#323130" stroke-width="1.1"><path d="M5.5 0V11M0 5.5H11"/></svg>
<!-- status bar -->
<div class="a" style="left:0;top:936px;width:1280px;height:23px;background:#fff;border-top:1px solid #e1dfdd"></div>
<div class="t" style="left:14.5px;top:941px;font-size:11.3px;line-height:14px;color:#444"><span style="letter-spacing:-0.053px;display:inline-block">Modo de cálculo: Automático</span></div>
<div class="t" style="left:175.5px;top:941px;font-size:11.3px;line-height:14px;color:#444"><span style="letter-spacing:-0.182px;display:inline-block">Estadísticas del libro de trabajo</span></div>
<svg style="left:927px;top:945.6px" width="5.6" height="4" viewBox="0 0 7 5"><path d="M0.6 0.8L3.5 3.8L6.4 0.8" stroke="#323130" stroke-width="1.2" fill="none"/></svg>
<div class="t" style="left:972.5px;top:941px;font-size:11.3px;line-height:14px;color:#444"><span style="letter-spacing:-0.076px;display:inline-block">Proporcionar comentarios a Microsoft</span></div>
<div class="a" style="left:1197px;top:948px;width:11px;height:1px;background:#3a3a3a"></div>
<div class="t" style="left:1217.5px;top:941px;font-size:11.3px;line-height:14px;color:#444"><span style="letter-spacing:-0.602px;display:inline-block">100%</span></div>
<svg style="left:1251px;top:943px" width="11" height="11" viewBox="0 0 11 11" stroke="#323130" stroke-width="1.1"><path d="M5.5 0V11M0 5.5H11"/></svg>
<!-- window edge -->
<div class="a" style="left:0;top:959px;width:1280px;height:1px;background:#111"></div>
<div class="a" style="left:1279px;top:0;width:1px;height:960px;background:#0c0c0c"></div>
</div>
</body>
</html>
